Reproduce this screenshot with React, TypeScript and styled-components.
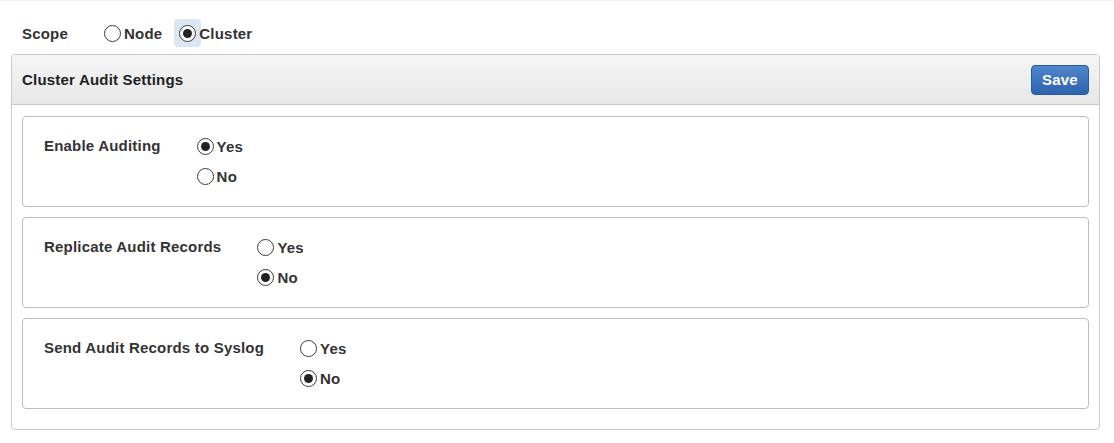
import React, { useState } from "react";
import styled, { createGlobalStyle } from "styled-components";

const GlobalStyle = createGlobalStyle`
  body {
    margin: 0;
    background: #ffffff;
    font-family: "Liberation Sans", Arial, sans-serif;
    color: #333333;
  }
`;

const Page = styled.div`
  width: 1114px;
  height: 443px;
  padding: 18px 14px 0 11px;
  box-sizing: border-box;
  border-top: 1px solid #f0f0f0;
`;

const ScopeRow = styled.div`
  display: flex;
  align-items: center;
  height: 28px;
  padding-left: 11px;
  margin-bottom: 7px;
`;

const FieldLabel = styled.div<{ $row?: boolean }>`
  font-size: 15px;
  font-weight: bold;
  letter-spacing: 0.2px;
  color: #333333;
  margin-right: 36px;
  line-height: ${({ $row }) => ($row ? "30px" : "normal")};
  white-space: nowrap;
`;

const Option = styled.label`
  display: flex;
  align-items: center;
  height: 30px;
  font-size: 15px;
  font-weight: bold;
  letter-spacing: 0.2px;
  color: #333333;
  cursor: pointer;
  margin-right: 17px;
`;

const RadioWrap = styled.span<{ $focused?: boolean }>`
  display: flex;
  align-items: center;
  justify-content: center;
  height: 28px;
  padding: 0 5px;
  margin: 0 -2px 0 -5px;
  border-radius: 4px;
  background: ${({ $focused }) => ($focused ? "#dbe6f3" : "transparent")};
`;

const RadioCircle = styled.span<{ $checked: boolean }>`
  width: 17px;
  height: 17px;
  box-sizing: border-box;
  border: 1px solid #3a3a3a;
  border-radius: 50%;
  background: #ffffff;
  display: flex;
  align-items: center;
  justify-content: center;
  &::after {
    content: "";
    width: 9px;
    height: 9px;
    border-radius: 50%;
    background: #222222;
    display: ${({ $checked }) => ($checked ? "block" : "none")};
  }
`;

const Panel = styled.div`
  border: 1px solid #c9c9c9;
  border-radius: 4px;
  height: 376px;
  box-sizing: border-box;
  overflow: hidden;
`;

const PanelHeader = styled.div`
  display: flex;
  align-items: center;
  justify-content: space-between;
  height: 49px;
  padding: 0 10px 0 10px;
  background: linear-gradient(#f5f5f5, #e7e7e7);
  border-bottom: 1px solid #c9c9c9;
`;

const PanelTitle = styled.div`
  font-size: 15px;
  font-weight: bold;
  letter-spacing: 0.2px;
  color: #222222;
`;

const SaveButton = styled.button`
  height: 30px;
  width: 58px;
  border: 1px solid #2c5a9c;
  border-radius: 4px;
  background: linear-gradient(#4f86cc, #2d62ad);
  color: #ffffff;
  font-family: "Liberation Sans", Arial, sans-serif;
  font-size: 15px;
  font-weight: bold;
  letter-spacing: 0.2px;
  cursor: pointer;
  padding: 0;
`;

const PanelBody = styled.div`
  display: flex;
  flex-direction: column;
  gap: 10px;
  padding: 11px 10px;
`;

const Section = styled.div`
  display: flex;
  align-items: flex-start;
  border: 1px solid #bdbdbd;
  border-radius: 4px;
  padding: 14px 21px 15px 21px;
`;

const OptionList = styled.div`
  display: flex;
  flex-direction: column;
`;

type RadioProps = {
  label: string;
  checked: boolean;
  focused?: boolean;
  onSelect: () => void;
};

const Radio = ({ label, checked, focused, onSelect }: RadioProps) => (
  <Option onClick={onSelect}>
    <RadioWrap $focused={focused}>
      <RadioCircle $checked={checked} />
    </RadioWrap>
    {label}
  </Option>
);

const settings = [
  { key: "enable", label: "Enable Auditing", initial: "Yes" },
  { key: "replicate", label: "Replicate Audit Records", initial: "No" },
  { key: "syslog", label: "Send Audit Records to Syslog", initial: "No" },
];

export default function App() {
  const [scope, setScope] = useState("Cluster");
  const [values, setValues] = useState<Record<string, string>>(
    Object.fromEntries(settings.map((s) => [s.key, s.initial]))
  );

  return (
    <>
      <GlobalStyle />
      <Page>
        <ScopeRow>
          <FieldLabel>Scope</FieldLabel>
          {["Node", "Cluster"].map((s) => (
            <Radio
              key={s}
              label={s}
              checked={scope === s}
              focused={scope === s}
              onSelect={() => setScope(s)}
            />
          ))}
        </ScopeRow>
        <Panel>
          <PanelHeader>
            <PanelTitle>Cluster Audit Settings</PanelTitle>
            <SaveButton>Save</SaveButton>
          </PanelHeader>
          <PanelBody>
            {settings.map((s) => (
              <Section key={s.key}>
                <FieldLabel $row>{s.label}</FieldLabel>
                <OptionList>
                  {["Yes", "No"].map((v) => (
                    <Radio
                      key={v}
                      label={v}
                      checked={values[s.key] === v}
                      onSelect={() => setValues({ ...values, [s.key]: v })}
                    />
                  ))}
                </OptionList>
              </Section>
            ))}
          </PanelBody>
        </Panel>
      </Page>
    </>
  );
}
